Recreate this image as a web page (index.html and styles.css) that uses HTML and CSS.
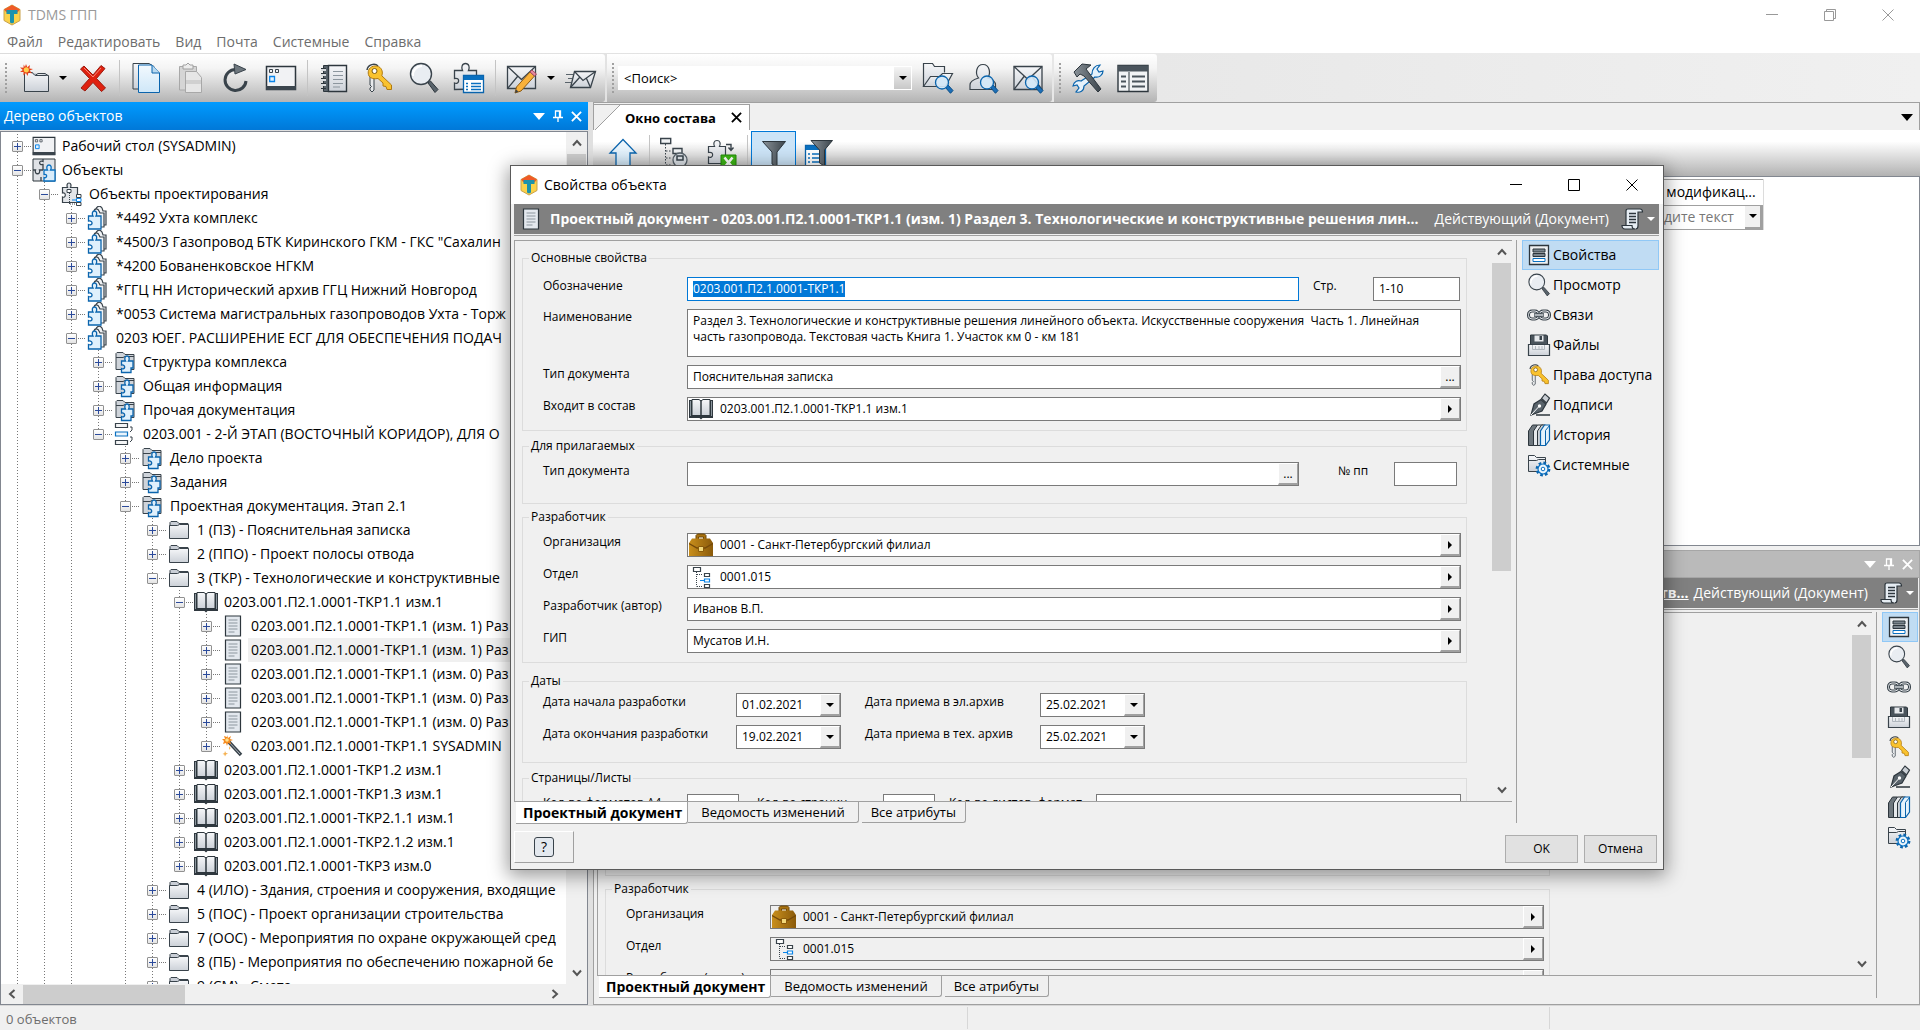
FILE: index.html
```
<!DOCTYPE html>
<html lang="ru">
<head>
  <meta charset="UTF-8">
  <title>TDMS ГПП</title>
  <link rel="stylesheet" href="styles.css">
</head>
<body>

<svg class="sprite" aria-hidden="true">
  <defs>
    <linearGradient id="gGrey" x1="0" y1="0" x2="0" y2="1"><stop offset="0" stop-color="#f6f7f9"/><stop offset="1" stop-color="#ccd1d8"/></linearGradient>
    <linearGradient id="gDark" x1="0" y1="0" x2="1" y2="0"><stop offset="0" stop-color="#8a9299"/><stop offset="1" stop-color="#3c454c"/></linearGradient>
    <linearGradient id="gBlue" x1="0" y1="0" x2="0" y2="1"><stop offset="0" stop-color="#f2f9fe"/><stop offset="1" stop-color="#cfe7f8"/></linearGradient>
    <linearGradient id="gBag" x1="0" y1="0" x2="1" y2="0"><stop offset="0" stop-color="#c98f1c"/><stop offset="1" stop-color="#8a5a0a"/></linearGradient>
  </defs>

  <symbol id="i-logo" viewBox="0 0 20 22">
    <path d="M10 1l8 4.500v11L10 21l-8-4.500v-11z" fill="#fbd24a" stroke="#c9a24a"/>
    <path d="M10 1l8 4.500-2.500 3L10 6 4.500 8.500 2 5.500z" fill="#ef5a28"/>
    <path d="M4.500 6h11v4h-3.500v8.500l-2 1-2-1V10H4.500z" fill="#1c93ad"/>
  </symbol>
  <symbol id="i-folder" viewBox="0 0 24 24">
    <path d="M3 20.500V4.500l1-1h6l2 2h9v3" fill="#c9ced6" stroke="#39434b"/>
    <path d="M2.500 7.500h8l2-1h9v14h-19z" fill="url(#gGrey)" stroke="#39434b"/>
  </symbol>
  <symbol id="i-newfolder" viewBox="0 0 32 32">
    <path d="M6.500 14v-3.500h8l3 3h13V29.500h-24z" fill="url(#gGrey)" stroke="#39434b"/>
    <path d="M14 10.500l3 3 3-2h7l3 2" fill="#c9ced6" stroke="#39434b"/>
    <path d="M8 2l1.300 3.200L12 3l-.6 3.400 3.600.600-3.200 1.600L14 11.500l-3.500-.9L9.500 14 8 11l-2.600 2.500.1-3.500L2 10l2.800-2L2 5.500l3.500.2L5.700 2.500 7 5z" fill="#e8421a"/>
    <circle cx="8.300" cy="7.800" r="2.600" fill="#ffcf4d"/>
  </symbol>
  <symbol id="i-delete" viewBox="0 0 32 32">
    <path d="M7 4l9 9 8-9.500 4 3-8.500 10L28.500 26l-4 3.500L16 20.500 8 29l-4-3 8.500-9.500L3.500 7z" fill="#e0210f" stroke="#9c1c10"/>
    <path d="M7 6l9 9 8-9" fill="none" stroke="#f58a7c"/>
  </symbol>
  <symbol id="i-copy" viewBox="0 0 32 32">
    <path d="M3 1.500h16l5 3V27H3z" fill="url(#gGrey)" stroke="#39434b"/>
    <path d="M8.500 3h13.500l7.500 8v19.500h-21z" fill="url(#gBlue)" stroke="#0a64ad"/>
    <path d="M22 3v8h7.500" fill="#b9d9f0" stroke="#0a64ad"/>
  </symbol>
  <symbol id="i-paste" viewBox="0 0 32 32">
    <path d="M4.500 4.500h17V28h-17z" fill="#d5d5d5" stroke="#a8a8a8"/>
    <path d="M8 3h3l2-2 2 2h3v4H8z" fill="#ececec" stroke="#a0a0a0"/>
    <path d="M10.500 9.500h11l5 6v15h-16z" fill="#e6e6e6" stroke="#a8a8a8"/>
    <path d="M11 18h15v4H11z" fill="#d0d0d0"/>
  </symbol>
  <symbol id="i-refresh" viewBox="0 0 32 32">
    <path d="M15.500 7.500A10.500 10.500 0 1 0 26 19" fill="none" stroke="#39434b" stroke-width="3"/>
    <path d="M14 2l12 5.500L15 12z" fill="#6e777e" stroke="#39434b"/>
  </symbol>
  <symbol id="i-desktop" viewBox="0 0 32 28">
    <path d="M1.500 2.500h29v23h-29z" fill="#f1f2f4" stroke="#2d363d" stroke-width="1.500"/>
    <path d="M1 22h30v4H1z" fill="#3b454d"/>
    <path d="M4.500 5.500h3v3h-3zM10.500 5.500h3v3h-3z" fill="none" stroke="#39434b"/>
    <path d="M4.700 12.500h4.800v5H4.700z" fill="#e3f1fd" stroke="#0a84e8" stroke-width="1.300"/>
  </symbol>
  <symbol id="i-notebook" viewBox="0 0 32 32">
    <path d="M5.500 3.500h6v26h-6z" fill="#59636b" stroke="#2d363d"/>
    <path d="M10.500 3.500h18v26h-18z" fill="url(#gGrey)" stroke="#2d363d" stroke-width="1.400"/>
    <path d="M3 8h5M3 13h5M3 18h5M3 23h5" stroke="#d7dadd" stroke-width="2"/>
    <path d="M3 6.500h5M3 11.500h5M3 16.500h5M3 21.500h5M3 26.500h5" stroke="#2d363d"/>
    <path d="M15 9.500h10M15 13.500h10M15 17.500h10M15 21.500h10M15 25h7" stroke="#8c969e"/>
  </symbol>
  <symbol id="i-key" viewBox="0 0 32 32">
    <path d="M7 14h4v14l-2 2-2-2v-2l1.500-1.500L7 23v-3z" fill="#e8eaec" stroke="#39434b"/>
    <path d="M4 8c1-6 8-7 11-4" fill="none" stroke="#39434b" stroke-width="1.500"/>
    <path d="M5.500 8.500C7 4 13 2.500 17 5.500c3 3 2.500 6 1.800 8.300L28.500 23v4.500H24l-1-3-3-.5v-3l-5-4.500c-4 .8-7.500 0-9-2.500-1-2-.9-3.900-.5-5.500z" fill="#f9c22e" stroke="#b07a10"/>
    <circle cx="11.500" cy="9" r="2.500" fill="#fff" stroke="#7a5a14"/>
  </symbol>
  <symbol id="i-zoom" viewBox="0 0 32 32">
    <path d="M20 21l2.500-2 7.500 8.500-3 3z" fill="#59636b" stroke="#2d363d"/>
    <circle cx="13" cy="12" r="10.500" fill="#e9edf2" stroke="#39434b" stroke-width="1.400"/>
    <path d="M5 14a9 9 0 0 1 9-10" fill="none" stroke="#fff" stroke-width="2"/>
  </symbol>
  <symbol id="i-puzzlelist" viewBox="0 0 32 32">
    <path d="M1.500 27.500V21c5 2 6-6 0-4.500V8.500h8c-1.500-3-.5-7 3-7s4.500 4 3 7h8V27z" fill="url(#gGrey)" stroke="#39434b" stroke-width="1.300"/>
    <path d="M10.500 13.500h20v17h-20z" fill="#fff" stroke="#0a64ad" stroke-width="1.300"/>
    <path d="M11 14h19v4H11z" fill="#0a70c0"/>
    <path d="M13 21.500h2M13 24.500h2M13 27.500h2M18 21.500h10M18 24.500h10M18 27.500h10" stroke="#0a70c0" stroke-width="1.600"/>
  </symbol>
  <symbol id="i-mail" viewBox="0 0 32 32">
    <path d="M2 4.500h28v23H2z" fill="url(#gGrey)" stroke="#39434b" stroke-width="1.300"/>
    <path d="M2 4.500l14 13 14-13M2 27.500l10-13M30 27.500l-10-13" fill="none" stroke="#39434b" stroke-width="1.300"/>
  </symbol>
  <symbol id="i-mailedit" viewBox="0 0 32 32">
    <path d="M1.500 4.500h28v22h-28z" fill="url(#gGrey)" stroke="#39434b" stroke-width="1.300"/>
    <path d="M1.500 4.500l14 13 14-13M1.500 26.500l10-12" fill="none" stroke="#39434b" stroke-width="1.300"/>
    <path d="M9 31l1.500-6L24 10l4.500 4L15 29z" fill="#f9b13a" stroke="#8c5a14"/>
    <path d="M24 10l2-2 4.500 4-2 2z" fill="#e78aa0" stroke="#a34a60"/>
    <path d="M9 31l1-3.500 2.500 2z" fill="#39434b"/>
  </symbol>
  <symbol id="i-mailsend" viewBox="0 0 32 32">
    <path d="M9.500 9.500h21l-5 16h-20z" fill="url(#gGrey)" stroke="#39434b" stroke-width="1.300"/>
    <path d="M9.500 9.500L18 18.500l12.500-9M5.500 25.500l9-10M25.500 25.500l-4-9" fill="none" stroke="#39434b" stroke-width="1.300"/>
    <path d="M1 12.500h7M3 16.500h4M0 20.500h6" stroke="#59636b"/>
  </symbol>
  <symbol id="i-lens" viewBox="0 0 32 32">
    <path d="M23 25l2.500-2.500L31 28.500l-2.500 2.800z" fill="#1c6fb8" stroke="#0a4d86"/>
    <circle cx="20" cy="20.500" r="6.500" fill="#d5e9f8" fill-opacity=".9" stroke="#0a64ad" stroke-width="1.300"/>
  </symbol>
  <symbol id="i-foldersearch" viewBox="0 0 32 32">
    <path d="M1.500 24.500V1.500h9l2 3h10v6" fill="url(#gGrey)" stroke="#39434b" stroke-width="1.200"/>
    <path d="M1.500 24.500l7-10h9l3-3h10l-7 13z" fill="url(#gGrey)" stroke="#39434b" stroke-width="1.200"/>
    <use href="#i-lens"/>
  </symbol>
  <symbol id="i-usersearch" viewBox="0 0 32 32">
    <path d="M3 27.500V23c0-4 5-6 8.500-7C8 12 9 2.500 16 2.500S24 12 20.500 16c4 1 8 3 8 7v4.500z" fill="url(#gGrey)" stroke="#39434b" stroke-width="1.200"/>
    <use href="#i-lens"/>
  </symbol>
  <symbol id="i-mailsearch" viewBox="0 0 32 32">
    <use href="#i-mail"/>
    <use href="#i-lens"/>
  </symbol>
  <symbol id="i-tools" viewBox="0 0 32 32">
    <path d="M20 12c0-5 3-9 8-9l-3 4 2 3 4-1c0 4-4 7-8 6L12 24c0 5-4 7-8 6l3-4-2-3-4 1c1-5 5-6 8-5z" fill="#e6f2fb" stroke="#0a64ad" stroke-width="1.200"/>
    <path d="M2 10l8-8 9 1-5 4 3 4 12 16-3 3-14-16-4-2-3 3z" fill="url(#gDark)" stroke="#2d363d"/>
  </symbol>
  <symbol id="i-table" viewBox="0 0 32 32">
    <path d="M1 3.500h30v26H1z" fill="#f1f3f5" stroke="#2d363d" stroke-width="1.400"/>
    <path d="M1 3.500h30v6H1z" fill="#4a545c"/>
    <path d="M12 10v19" stroke="#2d363d"/>
    <path d="M4 14.500h5M4 19.500h5M4 24.500h5M15 14.500h13M15 19.500h13M15 24.500h13" stroke="#4a545c" stroke-width="2"/>
  </symbol>
  <symbol id="i-up" viewBox="0 0 32 32">
    <path d="M16 2.500L29 16h-6v14.500H9V16H3z" fill="url(#gBlue)" stroke="#0a64ad" stroke-width="1.300"/>
  </symbol>
  <symbol id="i-treesearch" viewBox="0 0 32 32">
    <path d="M5.500 7v21M6 14h6M6 21h6M6 28h6" stroke="#39434b" stroke-dasharray="1.500 1.500" fill="none"/>
    <path d="M.7 1.500h10v5H.7zM13 11.500h9v5h-9z" fill="#f1f3f5" stroke="#39434b" stroke-width="1.400"/>
    <circle cx="20" cy="23" r="7" fill="#dfe4ea" fill-opacity=".9" stroke="#59636b" stroke-width="1.300"/>
    <path d="M17 19h6v4h-6zM25 28l5 5" stroke="#39434b" fill="none" stroke-width="1.500"/>
  </symbol>
  <symbol id="i-puzzlexls" viewBox="0 0 32 32">
    <path d="M3.500 26.500V20c5 2 6-6 0-4.500V9.500h6c-1.500-3-.5-6 2.500-6s4 3 2.500 6h6v17z" fill="url(#gGrey)" stroke="#39434b" stroke-width="1.200"/>
    <path d="M21 7.500h5v5M23.500 10.500l2.500 3 2.500-3" fill="none" stroke="#39434b" stroke-width="1.400"/>
    <path d="M16 18h15v14H16z" fill="#3db516" stroke="#238a06"/>
    <path d="M19.500 20.500l8 10M27.500 20.500l-8 10" stroke="#fff" stroke-width="2.600"/>
  </symbol>
  <symbol id="i-funnel" viewBox="0 0 32 32">
    <path d="M4.500 4.500h23L19 15v15l-5-3V15z" fill="url(#gDark)" stroke="#2d363d"/>
  </symbol>
  <symbol id="i-funnellist" viewBox="0 0 32 32">
    <path d="M2.500 8.500h20v21h-20z" fill="#fff" stroke="#0a64ad" stroke-width="1.300"/>
    <path d="M3 9h19v4H3z" fill="#0a70c0"/>
    <path d="M5 17h2M5 21h2M5 25h2M9 17h8M9 21h8M9 25h8" stroke="#0a70c0" stroke-width="1.600"/>
    <path d="M8 3.500h21.500L21.500 13v16l-5-3V13z" fill="url(#gDark)" stroke="#2d363d"/>
  </symbol>
  <symbol id="i-objects" viewBox="0 0 24 24">
    <path d="M1 1h22v22H1z" fill="#dfe2e6" stroke="#2d363d"/>
    <path d="M12 23v-3.500c3 1.500 4-4 0-3V12h3.500c-1.500-2.500-.5-5 1.500-5s3 2.500 1.500 5H23v11z" fill="#d9ecfa" stroke="#0a70c0" stroke-width="1.300"/>
    <path d="M11 1v2.500c-4-2-5 4 0 3V12M1 12h2.500c-1.500 5 5.500 5 4 0H11M9 23v-4" fill="none" stroke="#39434b" stroke-width="1.300"/>
  </symbol>
  <symbol id="i-project" viewBox="0 0 24 24">
    <path d="M3.500 20.500V15c3.500 1.500 4-5 0-4V5.500h5c-1-2-.5-4.500 1.500-4.500s2.500 2.500 1.500 4.500h7v15z" fill="#e2e5e9" stroke="#39434b" stroke-width="1.200"/>
    <path d="M8 7.500h4v3H8z" fill="#fff" stroke="#39434b"/>
    <path d="M10.500 11v11M11 22h7" stroke="#39434b" stroke-dasharray="1 1" fill="none"/>
    <path d="M17.500 12.500h4.500v3h-4.500zM17.500 20.500h4.500v3h-4.500z" fill="#fff" stroke="#39434b"/>
    <path d="M17.500 16.500h4.500v3h-4.500zM13 18h4" fill="#fff" stroke="#0a84e8"/>
  </symbol>
  <symbol id="i-complex" viewBox="0 0 24 24">
    <path d="M10 4c0-4 4-5 6-2l1 3h3v14h-3" fill="#f1f3f5" stroke="#39434b" stroke-width="1.200"/>
    <path d="M8 6c0-4 4-4 5-1l1 2h4v14h-3" fill="#f1f3f5" stroke="#39434b" stroke-width="1.200"/>
    <path d="M2.500 23v-4.500c4.500 2 5-4.500 0-3.500v-5h4.500c-1.500-2.500-.5-5 1.500-5s3 2.500 1.500 5h5v13z" fill="#dff0fc" stroke="#0a64ad" stroke-width="1.300"/>
  </symbol>
  <symbol id="i-folderpuzzle" viewBox="0 0 24 24">
    <path d="M3 19.500V3.500l1-1h6l2 2h9v15z" fill="#cfd4da" stroke="#39434b"/>
    <path d="M3 7.500h7l2-1h9" fill="none" stroke="#39434b"/>
    <path d="M8.500 22.500V18.500c4 2 4.500-4.500 0-3.500v-4h4c-1.500-2.500-.5-5 1.500-5s3 2.500 1.500 5h4.500v7h-2v4.500z" fill="#dff0fc" stroke="#0a64ad" stroke-width="1.300"/>
  </symbol>
  <symbol id="i-stage" viewBox="0 0 24 24">
    <path d="M2.500 1.500h12v4h-12zM2.500 18.500h12v4h-12z" fill="#f4f5f6" stroke="#39434b" stroke-width="1.200"/>
    <path d="M2.500 10h12v4h-12z" fill="#eaf5fd" stroke="#0a70c0" stroke-width="1.200"/>
    <path d="M17 5h2v3l-2 2M17 15h2v3l-2 2" fill="none" stroke="#39434b"/>
  </symbol>
  <symbol id="i-book" viewBox="0 0 24 24">
    <path d="M0 3h24v18H13.500l-1.500 1.500L10.500 21H0z" fill="#2f383f"/>
    <path d="M3 2.500h7l2 1.500 2-1.500h7V18.500H3z" fill="url(#gGrey)" stroke="#2d363d"/>
    <path d="M1.500 4v15M22.500 4v15" stroke="#8c969e"/>
    <path d="M12 4v15" stroke="#2d363d" stroke-width="1.500"/>
  </symbol>
  <symbol id="i-doc" viewBox="0 0 24 24">
    <path d="M4.500 2h15v20h-15z" fill="#e3e8ee" stroke="#2d363d" stroke-width="1.200"/>
    <path d="M7.500 6h9M7.500 9h9M7.500 12h9M7.500 15h9M7.500 18h6" stroke="#8c969e"/>
  </symbol>
  <symbol id="i-wand" viewBox="0 0 24 24">
    <path d="M7 7l13 14" stroke="#39434b" stroke-width="3.500"/>
    <path d="M8 8l11 12" stroke="#aab1b8"/>
    <path d="M6 1l1 3 3-2-1 3 3 1-3 1 1 3-3-1-1 3-1-3-3 1 1-3-2-2 3 0-1-3 3 1z" fill="#f58a1e"/>
    <circle cx="6" cy="6" r="1.800" fill="#ffe08a"/>
    <path d="M4 17l1 2 2 .5-2 1-1 2-.7-2L1.500 20l2-1zM8 12l.7 1.500L10 14l-1.300.7L8 16z" fill="#f5b04e"/>
  </symbol>
  <symbol id="i-props" viewBox="0 0 24 24">
    <path d="M2.500 2.500h19v19h-19z" fill="#eef0f2" stroke="#2d363d" stroke-width="1.300"/>
    <path d="M6 6h12v3H6zM6 10.500h12v3H6z" fill="#7b858d" stroke="#2d363d"/>
    <path d="M6 15.500h12v3H6z" fill="#fff" stroke="#0a70c0"/>
  </symbol>
  <symbol id="i-link" viewBox="0 0 24 24">
    <rect x="1.500" y="8" width="10" height="8" rx="3.500" fill="none" stroke="#39434b" stroke-width="3"/>
    <rect x="12.500" y="8" width="10" height="8" rx="3.500" fill="none" stroke="#39434b" stroke-width="3"/>
    <rect x="1.500" y="8" width="10" height="8" rx="3.500" fill="none" stroke="#e6e9ec"/>
    <rect x="12.500" y="8" width="10" height="8" rx="3.500" fill="none" stroke="#e6e9ec"/>
    <path d="M7 12h10" stroke="#39434b" stroke-width="3.500"/><path d="M7.500 12h9" stroke="#d5d9dd" stroke-width="1.500"/>
  </symbol>
  <symbol id="i-files" viewBox="0 0 24 24">
    <path d="M3.500 12V2h16l1 1v9z" fill="#4a545c" stroke="#2d363d"/>
    <path d="M7.500 2.500h9v6h-9z" fill="#e6e9ec"/><path d="M12.500 3h2.500v4h-2.500z" fill="#39434b"/>
    <path d="M1.500 11.500h21v11h-21z" fill="url(#gGrey)" stroke="#39434b" stroke-width="1.200"/>
    <path d="M5.500 12v4.500h12V12M8.500 13v3M12 13v3M15 13v3" fill="none" stroke="#b0b7be"/>
  </symbol>
  <symbol id="i-pen" viewBox="0 0 24 24">
    <path d="M4 22l3-11 7-4.500L19 11l-4 7z" fill="#59636b" stroke="#2d363d" stroke-width="1.200"/>
    <path d="M14.500 5.500L18 1l4.500 4-3 5z" fill="#c9ced4" stroke="#2d363d" stroke-width="1.200"/>
    <path d="M4 22l7.500-8" stroke="#fff"/><circle cx="12.500" cy="13" r="1.700" fill="#fff"/>
    <path d="M9 22h14" stroke="#2d363d" stroke-width="1.500"/>
  </symbol>
  <symbol id="i-history" viewBox="0 0 24 24">
    <path d="M1.500 22.500V8l4-6h5V17l-3 5.500z" fill="#6e777e" stroke="#2d363d"/>
    <path d="M6.500 22.500V8l4-6h6v15l-3 5.500z" fill="#e6e9ec" stroke="#2d363d"/>
    <path d="M10.500 22.500V8l4-6h4v15l-3 5.500z" fill="#cdd2d7" stroke="#2d363d"/>
    <path d="M13.500 22.500V8l4-6h5v15l-4 5.500z" fill="#e6f3fc" stroke="#0a64ad" stroke-width="1.200"/>
    <path d="M18.500 22V7.500l4-5" fill="none" stroke="#0a64ad"/>
  </symbol>
  <symbol id="i-system" viewBox="0 0 24 24">
    <path d="M1.500 18.500V2.500h6l2 2h9v14z" fill="url(#gGrey)" stroke="#39434b"/>
    <path d="M1.500 7.500h8l2-1h7" fill="none" stroke="#39434b"/>
    <circle cx="16" cy="16" r="5.800" fill="#d9ecfa" stroke="#0a64ad" stroke-width="3.200" stroke-dasharray="2.500 2"/>
    <circle cx="16" cy="16" r="5" fill="#e9f4fc" stroke="#0a70c0" stroke-width="1.200"/>
    <circle cx="16" cy="16" r="1.800" fill="#fff" stroke="#0a70c0"/>
  </symbol>
  <symbol id="i-bag" viewBox="0 0 24 24">
    <path d="M7 7V2.500L8.500 1h7L17 2.500V7h-2.500V4h-5v3z" fill="#a8720f" stroke="#6d4708"/>
    <path d="M0 10l3-4.500h18L24 10v13H0z" fill="url(#gBag)"/>
    <path d="M0 10.500L8 15h8l8-4.500" fill="none" stroke="#74490a" stroke-width="1.300"/>
    <path d="M9.500 13.500h5v5h-5z" fill="#f1d779" stroke="#8a5a0a"/>
  </symbol>
  <symbol id="i-org" viewBox="0 0 24 24">
    <path d="M7.500 7v14.500M8 9.500h6M8 21.500h6" stroke="#39434b" stroke-dasharray="1 1" fill="none"/>
    <path d="M4.500 2.500h7v4h-7zM15.500 8.500h5v3h-5zM15.500 19.500h5v3h-5z" fill="#fff" stroke="#39434b" stroke-width="1.200"/>
    <path d="M15.500 14h5v3h-5zM11 15.500h4" fill="#fff" stroke="#0a84e8" stroke-width="1.200"/>
  </symbol>
  <symbol id="i-scroll" viewBox="0 0 24 24">
    <path d="M6 18V4c0-1.500 1-2 2-2h12c2 0 2.500 1 2.500 3H18v14c0 2-1 3-2.500 3" fill="#e6edf3" stroke="#2d363d" stroke-width="1.200"/>
    <path d="M2 18.500h10c0 2 1 3.500 3 3.500H5c-2 0-3-1.500-3-3.500z" fill="#e6edf3" stroke="#2d363d" stroke-width="1.200"/>
    <path d="M9 6.500h7M9 9.500h7M9 12.500h7M9 15.500h7" stroke="#2d363d" stroke-width="1.300"/>
  </symbol>
  <symbol id="i-caret" viewBox="0 0 8 4"><path d="M0 0h8L4 4z" fill="currentColor"/></symbol>
  <symbol id="i-tri" viewBox="0 0 12 7"><path d="M0 0h12L6 7z" fill="currentColor"/></symbol>
  <symbol id="i-right" viewBox="0 0 4 8"><path d="M0 0l4 4-4 4z" fill="currentColor"/></symbol>
  <symbol id="i-chup" viewBox="0 0 10 8"><path d="M1 6.500l4-4.500 4 4.500" fill="none" stroke="currentColor" stroke-width="2"/></symbol>
  <symbol id="i-chdown" viewBox="0 0 10 8"><path d="M1 1.500L5 6l4-4.500" fill="none" stroke="currentColor" stroke-width="2"/></symbol>
  <symbol id="i-chleft" viewBox="0 0 8 10"><path d="M6.500 1L2 5l4.500 4" fill="none" stroke="currentColor" stroke-width="2"/></symbol>
  <symbol id="i-chright" viewBox="0 0 8 10"><path d="M1.500 1L6 5 1.500 9" fill="none" stroke="currentColor" stroke-width="2"/></symbol>
  <symbol id="i-x" viewBox="0 0 12 12"><path d="M1 1l10 10M11 1L1 11" fill="none" stroke="currentColor" stroke-width="2"/></symbol>
  <symbol id="i-pin" viewBox="0 0 10 12"><path d="M2.500 7V1h5v6M6.500 1v6M0 7.500h10M5 8v4" fill="none" stroke="currentColor" stroke-width="1.300"/></symbol>
  <symbol id="i-wmin" viewBox="0 0 12 12"><path d="M0 5.500h12" stroke="currentColor"/></symbol>
  <symbol id="i-wmax" viewBox="0 0 12 12"><path d="M.5.5h11v11H.5z" fill="none" stroke="currentColor"/></symbol>
  <symbol id="i-wrestore" viewBox="0 0 12 12"><path d="M.5 2.500h9v9h-9zM2.500 2.500v-2h9v9h-2" fill="none" stroke="currentColor"/></symbol>
  <symbol id="i-wclose" viewBox="0 0 12 12"><path d="M.5.5l11 11M11.500.5l-11 11" stroke="currentColor"/></symbol>
</svg>

<header class="titlebar">
  <svg class="logo"><use href="#i-logo"/></svg>
  <span class="app-name">TDMS ГПП</span>
  <div class="win-buttons">
    <button aria-label="Свернуть"><svg><use href="#i-wmin"/></svg></button>
    <button aria-label="Восстановить"><svg><use href="#i-wrestore"/></svg></button>
    <button aria-label="Закрыть"><svg><use href="#i-wclose"/></svg></button>
  </div>
</header>

<nav class="menu">
  <button>Файл</button>
  <button>Редактировать</button>
  <button>Вид</button>
  <button>Почта</button>
  <button>Системные</button>
  <button>Справка</button>
</nav>

<div class="rebar">
  <div class="toolbar">
    <i class="grip"></i>
    <button class="tool" aria-label="Создать"><svg><use href="#i-newfolder"/></svg></button>
    <button class="drop" aria-label="Варианты"><svg class="caret"><use href="#i-caret"/></svg></button>
    <button class="tool" aria-label="Удалить"><svg><use href="#i-delete"/></svg></button>
    <i class="sep"></i>
    <button class="tool" aria-label="Копировать"><svg><use href="#i-copy"/></svg></button>
    <button class="tool" aria-label="Вставить"><svg><use href="#i-paste"/></svg></button>
    <button class="tool" aria-label="Обновить"><svg><use href="#i-refresh"/></svg></button>
    <button class="tool" aria-label="Рабочий стол"><svg><use href="#i-desktop"/></svg></button>
    <i class="sep"></i>
    <button class="tool" aria-label="Журнал"><svg><use href="#i-notebook"/></svg></button>
    <button class="tool" aria-label="Права доступа"><svg><use href="#i-key"/></svg></button>
    <button class="tool" aria-label="Просмотр"><svg><use href="#i-zoom"/></svg></button>
    <button class="tool" aria-label="Свойства"><svg><use href="#i-puzzlelist"/></svg></button>
    <i class="sep"></i>
    <button class="tool" aria-label="Написать"><svg><use href="#i-mailedit"/></svg></button>
    <button class="drop" aria-label="Варианты"><svg class="caret"><use href="#i-caret"/></svg></button>
    <button class="tool" aria-label="Отправить"><svg><use href="#i-mailsend"/></svg></button>
  </div>
  <div class="toolbar">
    <i class="grip"></i>
    <div class="search">
      <input type="text" value="&lt;Поиск&gt;" aria-label="Поиск">
      <button aria-label="Список"><svg class="caret"><use href="#i-caret"/></svg></button>
    </div>
    <button class="tool" aria-label="Найти объект"><svg><use href="#i-foldersearch"/></svg></button>
    <button class="tool" aria-label="Найти пользователя"><svg><use href="#i-usersearch"/></svg></button>
    <button class="tool" aria-label="Найти письмо"><svg><use href="#i-mailsearch"/></svg></button>
  </div>
  <div class="toolbar">
    <i class="grip"></i>
    <button class="tool" aria-label="Настройки"><svg><use href="#i-tools"/></svg></button>
    <button class="tool" aria-label="Панели"><svg><use href="#i-table"/></svg></button>
  </div>
</div>

<main class="work">
  <section class="left">
    <div class="pane-head">
      <span>Дерево объектов</span>
      <button aria-label="Меню"><svg class="tri"><use href="#i-tri"/></svg></button>
      <button aria-label="Закрепить"><svg class="pin"><use href="#i-pin"/></svg></button>
      <button aria-label="Закрыть"><svg class="x"><use href="#i-x"/></svg></button>
    </div>
    <div class="tree-box">
      <div class="tree-view">
        <ul class="tree" id="tree"></ul>
        <div class="vscroll">
          <svg><use href="#i-chup"/></svg>
          <i class="thumb"></i>
          <svg><use href="#i-chdown"/></svg>
        </div>
      </div>
      <div class="hscroll">
        <svg><use href="#i-chleft"/></svg>
        <i class="thumb"></i>
        <svg><use href="#i-chright"/></svg>
      </div>
    </div>
  </section>

  <section class="right">
    <div class="upper">
      <div class="doc-tabs">
        <div class="doc-tab"><span>Окно состава</span><button aria-label="Закрыть"><svg class="x"><use href="#i-x"/></svg></button></div>
        <button class="tabs-menu" aria-label="Окна"><svg class="tri"><use href="#i-tri"/></svg></button>
      </div>
      <div class="list-tools">
        <button class="tool" aria-label="Вверх"><svg><use href="#i-up"/></svg></button>
        <i class="sep"></i>
        <button class="tool" aria-label="Найти в дереве"><svg><use href="#i-treesearch"/></svg></button>
        <button class="tool" aria-label="Экспорт"><svg><use href="#i-puzzlexls"/></svg></button>
        <i class="sep"></i>
        <button class="tool on" aria-label="Фильтр"><svg><use href="#i-funnel"/></svg></button>
        <button class="tool" aria-label="Настройка фильтра"><svg><use href="#i-funnellist"/></svg></button>
      </div>
      <div class="list">
        <table>
          <thead>
            <tr><th>Описание</th><th class="date">Дата модификац...</th></tr>
            <tr>
              <td><input type="text" placeholder="Введите текст" aria-label="Фильтр по описанию"></td>
              <td class="date"><div class="filter"><input type="text" placeholder="Введите текст" aria-label="Фильтр по дате"><button aria-label="Список"><svg class="caret"><use href="#i-caret"/></svg></button></div></td>
            </tr>
          </thead>
        </table>
      </div>
    </div>

    <div class="lower">
      <div class="pane-head idle">
        <span></span>
        <button aria-label="Меню"><svg class="tri"><use href="#i-tri"/></svg></button>
        <button aria-label="Закрепить"><svg class="pin"><use href="#i-pin"/></svg></button>
        <button aria-label="Закрыть"><svg class="x"><use href="#i-x"/></svg></button>
      </div>
      <div class="doc-head linked">
        <a href="#">Проектный документ - 0203.001.П2.1.0001-ТКР1.1 (изм. 1) Раздел 3. Технологические и конструктивные решения линейного объекта. Искусств...</a>
        <span class="state">Действующий (Документ)</span>
        <button aria-label="Статус"><svg class="scroll"><use href="#i-scroll"/></svg><svg class="caret"><use href="#i-caret"/></svg></button>
      </div>
      <div class="card">
        <div class="card-main" id="paneCard"></div>
        <nav class="side small">
          <button class="on" aria-label="Свойства"><svg><use href="#i-props"/></svg></button>
          <button aria-label="Просмотр"><svg><use href="#i-zoom"/></svg></button>
          <button aria-label="Связи"><svg><use href="#i-link"/></svg></button>
          <button aria-label="Файлы"><svg><use href="#i-files"/></svg></button>
          <button aria-label="Права доступа"><svg><use href="#i-key"/></svg></button>
          <button aria-label="Подписи"><svg><use href="#i-pen"/></svg></button>
          <button aria-label="История"><svg><use href="#i-history"/></svg></button>
          <button aria-label="Системные"><svg><use href="#i-system"/></svg></button>
        </nav>
      </div>
    </div>
  </section>
</main>

<footer class="status"><span>0 объектов</span><span></span><span></span></footer>

<div class="dialog" role="dialog" aria-label="Свойства объекта">
  <div class="dialog-title">
    <svg class="logo"><use href="#i-logo"/></svg>
    <span>Свойства объекта</span>
    <div class="win-buttons">
      <button aria-label="Свернуть"><svg><use href="#i-wmin"/></svg></button>
      <button aria-label="Развернуть"><svg><use href="#i-wmax"/></svg></button>
      <button aria-label="Закрыть"><svg><use href="#i-wclose"/></svg></button>
    </div>
  </div>
  <div class="dialog-body">
    <div class="doc-head">
      <svg class="doc"><use href="#i-doc"/></svg>
      <b>Проектный документ - 0203.001.П2.1.0001-ТКР1.1 (изм. 1) Раздел 3. Технологические и конструктивные решения лин...</b>
      <span class="state">Действующий (Документ)</span>
      <button aria-label="Статус"><svg class="scroll"><use href="#i-scroll"/></svg><svg class="caret"><use href="#i-caret"/></svg></button>
    </div>
    <div class="card">
      <div class="card-main" id="dialogCard"></div>
      <nav class="side">
        <button class="on"><svg><use href="#i-props"/></svg>Свойства</button>
        <button><svg><use href="#i-zoom"/></svg>Просмотр</button>
        <button><svg><use href="#i-link"/></svg>Связи</button>
        <button><svg><use href="#i-files"/></svg>Файлы</button>
        <button><svg><use href="#i-key"/></svg>Права доступа</button>
        <button><svg><use href="#i-pen"/></svg>Подписи</button>
        <button><svg><use href="#i-history"/></svg>История</button>
        <button><svg><use href="#i-system"/></svg>Системные</button>
      </nav>
    </div>
    <div class="dialog-foot">
      <button class="help" aria-label="Справка"><span>?</span></button>
      <button class="btn">OK</button>
      <button class="btn">Отмена</button>
    </div>
  </div>
</div>

<!-- card of the document, used by the dialog and by the lower pane -->
<template id="cardTpl">
  <div class="form-view">
    <form class="form">
      <fieldset class="g-main">
        <legend>Основные свойства</legend>
        <div class="line">
          <label class="f"><span class="l1">Обозначение</span><span class="box w-mid"><input class="code" type="text" value="0203.001.П2.1.0001-ТКР1.1"></span></label>
          <label class="f"><span class="l-page">Стр.</span><span class="box w-page"><input type="text" value="1-10"></span></label>
        </div>
        <label class="f tall"><span class="l1">Наименование</span><textarea>Раздел 3. Технологические и конструктивные решения линейного объекта. Искусственные сооружения  Часть 1. Линейная часть газопровода. Текстовая часть Книга 1. Участок км 0 - км 181</textarea></label>
        <label class="f"><span class="l1">Тип документа</span><span class="box"><input type="text" value="Пояснительная записка"><button type="button">...</button></span></label>
        <label class="f"><span class="l1">Входит в состав</span><span class="box"><svg><use href="#i-book"/></svg><input type="text" value="0203.001.П2.1.0001-ТКР1.1 изм.1"><button type="button" aria-label="Открыть"><svg class="right-arrow"><use href="#i-right"/></svg></button></span></label>
      </fieldset>
      <fieldset class="g-attach">
        <legend>Для прилагаемых</legend>
        <div class="line">
          <label class="f"><span class="l1">Тип документа</span><span class="box w-mid"><input type="text"><button type="button">...</button></span></label>
          <label class="f"><span class="l-num">№ пп</span><span class="box w-num"><input type="text"></span></label>
        </div>
      </fieldset>
      <fieldset class="g-dev">
        <legend>Разработчик</legend>
        <label class="f"><span class="l1">Организация</span><span class="box"><svg><use href="#i-bag"/></svg><input type="text" value="0001 - Санкт-Петербургский филиал"><button type="button" aria-label="Открыть"><svg class="right-arrow"><use href="#i-right"/></svg></button></span></label>
        <label class="f"><span class="l1">Отдел</span><span class="box"><svg><use href="#i-org"/></svg><input type="text" value="0001.015"><button type="button" aria-label="Открыть"><svg class="right-arrow"><use href="#i-right"/></svg></button></span></label>
        <label class="f"><span class="l1">Разработчик (автор)</span><span class="box"><input type="text" value="Иванов В.П."><button type="button" aria-label="Открыть"><svg class="right-arrow"><use href="#i-right"/></svg></button></span></label>
        <label class="f"><span class="l1">ГИП</span><span class="box"><input type="text" value="Мусатов И.Н."><button type="button" aria-label="Открыть"><svg class="right-arrow"><use href="#i-right"/></svg></button></span></label>
      </fieldset>
      <fieldset class="g-dates">
        <legend>Даты</legend>
        <div class="line">
          <label class="f"><span class="l-date">Дата начала разработки</span><span class="box w-date"><input type="text" value="01.02.2021"><button type="button" aria-label="Календарь"><svg class="caret"><use href="#i-caret"/></svg></button></span></label>
          <label class="f"><span class="l-date2">Дата приема в эл.архив</span><span class="box w-date"><input type="text" value="25.02.2021"><button type="button" aria-label="Календарь"><svg class="caret"><use href="#i-caret"/></svg></button></span></label>
        </div>
        <div class="line">
          <label class="f"><span class="l-date">Дата окончания разработки</span><span class="box w-date"><input type="text" value="19.02.2021"><button type="button" aria-label="Календарь"><svg class="caret"><use href="#i-caret"/></svg></button></span></label>
          <label class="f"><span class="l-date2">Дата приема в тех. архив</span><span class="box w-date"><input type="text" value="25.02.2021"><button type="button" aria-label="Календарь"><svg class="caret"><use href="#i-caret"/></svg></button></span></label>
        </div>
      </fieldset>
      <fieldset class="g-pages">
        <legend>Страницы/Листы</legend>
        <div class="line">
          <label class="f"><span class="l1">Кол-во форматов А4</span><span class="box w-count"><input type="text"></span></label>
          <label class="f"><span class="l-count">Кол-во страниц</span><span class="box w-count"><input type="text"></span></label>
          <label class="f grow"><span class="l-format">Кол-во листов, формат</span><span class="box"><input type="text"></span></label>
        </div>
      </fieldset>
    </form>
    <div class="vscroll">
      <svg><use href="#i-chup"/></svg>
      <i class="thumb"></i>
      <svg><use href="#i-chdown"/></svg>
    </div>
  </div>
  <div class="tabs">
    <button class="on">Проектный документ</button>
    <button>Ведомость изменений</button>
    <button>Все атрибуты</button>
  </div>
</template>

<script>
  // [icon, text, state, children, current], state: "+" closed, "-" open
  const doc = "0203.001.П2.1.0001-ТКР";
  const data = [
    ["desktop", "Рабочий стол (SYSADMIN)", "+"],
    ["objects", "Объекты", "-", [
      ["project", "Объекты проектирования", "-", [
        ["complex", "*4492 Ухта комплекс", "+"],
        ["complex", "*4500/3 Газопровод БТК Киринского ГКМ - ГКС \"Сахалин", "+"],
        ["complex", "*4200 Бованенковское НГКМ", "+"],
        ["complex", "*ГГЦ НН Исторический архив ГГЦ Нижний Новгород", "+"],
        ["complex", "*0053 Система магистральных газопроводов Ухта - Торж", "+"],
        ["complex", "0203 ЮЕГ. РАСШИРЕНИЕ ЕСГ ДЛЯ ОБЕСПЕЧЕНИЯ ПОДАЧ", "-", [
          ["folderpuzzle", "Структура комплекса", "+"],
          ["folderpuzzle", "Общая информация", "+"],
          ["folderpuzzle", "Прочая документация", "+"],
          ["stage", "0203.001 - 2-Й ЭТАП (ВОСТОЧНЫЙ КОРИДОР), ДЛЯ О", "-", [
            ["folderpuzzle", "Дело проекта", "+"],
            ["folderpuzzle", "Задания", "+"],
            ["folderpuzzle", "Проектная документация. Этап 2.1", "-", [
              ["folder", "1 (ПЗ) - Пояснительная записка", "+"],
              ["folder", "2 (ППО) - Проект полосы отвода", "+"],
              ["folder", "3 (ТКР) - Технологические и конструктивные", "-", [
                ["book", doc + "1.1 изм.1", "-", [
                  ["doc", doc + "1.1 (изм. 1) Раз", "+"],
                  ["doc", doc + "1.1 (изм. 1) Раз", "+", null, true],
                  ["doc", doc + "1.1 (изм. 0) Раз", "+"],
                  ["doc", doc + "1.1 (изм. 0) Раз", "+"],
                  ["doc", doc + "1.1 (изм. 0) Раз", "+"],
                  ["wand", doc + "1.1 SYSADMIN", "+"]
                ]],
                ["book", doc + "1.2 изм.1", "+"],
                ["book", doc + "1.3 изм.1", "+"],
                ["book", doc + "2.1.1 изм.1", "+"],
                ["book", doc + "2.1.2 изм.1", "+"],
                ["book", doc + "3 изм.0", "+"]
              ]],
              ["folder", "4 (ИЛО) - Здания, строения и сооружения, входящие", "+"],
              ["folder", "5 (ПОС) - Проект организации строительства", "+"],
              ["folder", "7 (ООС) - Мероприятия по охране окружающей сред", "+"],
              ["folder", "8 (ПБ) - Мероприятия по обеспечению пожарной бе", "+"],
              ["folder", "9 (СМ) - Смета", "+"],
              ["folder", "", "+"]
            ]],
            ["folderpuzzle", "", "+"]
          ]]
        ]],
        ["complex", "", "+"]
      ]],
      ["project", "", "+"]
    ]],
    ["objects", "", "+"]
  ];

  function build(ul, items) {
    items.forEach(function (it) {
      const li = document.createElement("li");
      const row = document.createElement("div");
      row.className = "row" + (it[4] ? " current" : "");
      row.innerHTML = '<button class="exp ' + (it[2] === "-" ? "open" : "") + '" aria-label="Развернуть"></button><i class="stub"></i>' +
        '<svg><use href="#i-' + it[0] + '"/></svg><span></span>';
      row.querySelector("span").textContent = it[1];
      li.appendChild(row);
      if (it[3]) {
        const sub = document.createElement("ul");
        build(sub, it[3]);
        li.appendChild(sub);
      }
      ul.appendChild(li);
    });
  }
  build(document.getElementById("tree"), data);

  const tpl = document.getElementById("cardTpl").content;
  document.getElementById("paneCard").appendChild(tpl.cloneNode(true));
  document.getElementById("dialogCard").appendChild(tpl.cloneNode(true));
  document.querySelectorAll("#paneCard input, #paneCard textarea").forEach(function (el) {
    el.readOnly = true;
  });

  const code = document.querySelector("#dialogCard .code");
  code.focus();
  code.select();
</script>

</body>
</html>
```
FILE: styles.css
```
* {
  box-sizing: border-box;
}
body {
  margin: 0;
  height: 100vh;
  display: flex;
  flex-direction: column;
  overflow: hidden;
  background: #f0f0f0;
  font-family: "Open Sans", "Noto Sans", sans-serif;
  font-size: 14px;
  line-height: 20px;
  color: #000;
}
button, input, textarea {
  font: inherit;
  color: inherit;
  margin: 0;
  padding: 0;
  border: none;
  background: none;
  outline: none;
}
button {
  display: flex;
  align-items: center;
  justify-content: center;
}
svg {
  display: block;
  flex: none;
}
.sprite {
  position: absolute;
  width: 0;
  height: 0;
}
.caret { width: 8px; height: 4px; }
.tri { width: 12px; height: 7px; }
.pin { width: 10px; height: 12px; }
.x { width: 11px; height: 11px; }
.logo { width: 20px; height: 22px; }

/* main window */
.titlebar {
  height: 30px;
  display: flex;
  align-items: center;
  padding: 0 3px 0 2px;
  background: #fff;
  color: #999;
}
.app-name {
  margin-left: 6px;
}
.win-buttons {
  margin-left: auto;
  display: flex;
}
.win-buttons button {
  width: 58px;
  height: 28px;
}
.win-buttons svg {
  width: 12px;
  height: 12px;
}
.menu {
  height: 23px;
  display: flex;
  gap: 15px;
  padding-left: 7px;
  background: #fff;
  color: #6d6d6d;
}
.menu button {
  height: 23px;
}
.rebar {
  height: 49px;
  display: flex;
  gap: 2px;
  padding-top: 1px;
  background: linear-gradient(to right, #dcdcdc, #f0f0f0);
}
.toolbar {
  display: flex;
  align-items: center;
  padding-right: 2px;
  border-radius: 0 3px 3px 0;
  background: linear-gradient(#fff, #f4f4f4 30%, #b4b4b4);
}
.grip {
  width: 2px;
  height: 30px;
  margin: 0 4px 0 5px;
  background: repeating-linear-gradient(#a0a0a0 0 2px, transparent 2px 4px);
}
.tool {
  width: 45px;
  height: 45px;
}
.tool svg {
  width: 32px;
  height: 32px;
}
.drop {
  width: 14px;
  height: 45px;
}
.sep {
  width: 1px;
  height: 36px;
  margin: 0 3px 0 4px;
  background: #c4c4c4;
}
.search {
  width: 294px;
  height: 24px;
  display: flex;
  margin-right: 3px;
  background: #fff;
  font-size: 13px;
}
.search input {
  flex: 1;
  min-width: 0;
  padding-left: 6px;
}
.search button {
  width: 17px;
  margin: 1px;
  background: linear-gradient(#f4f4f4, #c8c8c8);
}

.work {
  flex: 1;
  min-height: 0;
  display: flex;
  gap: 5px;
  background: #e0e0e0;
}
.left {
  width: 588px;
  display: flex;
  flex-direction: column;
}
.pane-head {
  height: 28px;
  display: flex;
  align-items: center;
  gap: 8px;
  padding: 0 6px 0 4px;
  background: linear-gradient(#009bff, #0078d8);
  color: #fff;
}
.pane-head span {
  flex: 1;
}
.pane-head.idle {
  border: 1px solid #a6a6a6;
  background: #bababa;
}
.tree-box {
  flex: 1;
  min-height: 0;
  margin-top: 1px;
  border: 1px solid #828790;
  background: #fff;
  display: flex;
  flex-direction: column;
}
.tree-view {
  flex: 1;
  min-height: 0;
  display: flex;
}
.tree {
  flex: 1;
  min-width: 0;
  overflow: hidden;
  padding-top: 2px;
}
.tree, .tree ul {
  list-style: none;
  margin: 0;
  padding-left: 0;
}
.tree ul {
  margin-left: 27px;
}
/* dotted branch of each level, cut at the last row */
.tree li {
  background: repeating-linear-gradient(#777 0 1px, transparent 1px 3px) 16px 0 / 1px 100% no-repeat;
}
.tree li:last-child {
  background-size: 1px 12px;
}
.row {
  height: 24px;
  display: flex;
  align-items: center;
  padding-left: 11px;
  white-space: nowrap;
}
.exp {
  flex: none;
  width: 11px;
  height: 11px;
  border: 1px solid #919191;
  border-radius: 1px;
  background:
    linear-gradient(#2b4a9b, #2b4a9b) center / 7px 1px no-repeat,
    linear-gradient(#2b4a9b, #2b4a9b) center / 1px 7px no-repeat,
    linear-gradient(#fff, #e4e4e4);
}
.exp.open {
  background:
    linear-gradient(#2b4a9b, #2b4a9b) center / 7px 1px no-repeat,
    linear-gradient(#fff, #e4e4e4);
}
.stub {
  flex: none;
  width: 7px;
  height: 1px;
  margin: 0 1px;
  background: repeating-linear-gradient(to right, #777 0 1px, transparent 1px 2px);
}
.row svg {
  width: 24px;
  height: 24px;
}
.row span {
  flex: 1;
  margin-left: 3px;
  padding-left: 3px;
  line-height: 24px;
}
.row.current span {
  background: #f0f0f0;
}
.vscroll {
  flex: none;
  width: 21px;
  display: flex;
  flex-direction: column;
  align-items: center;
  background: #f0f0f0;
  color: #555;
}
.vscroll svg {
  width: 10px;
  height: 8px;
  margin: 7px 0;
}
.vscroll .thumb {
  width: 19px;
  height: 308px;
  background: #cdcdcd;
}
.vscroll svg:last-child {
  margin-top: auto;
}
.hscroll {
  height: 20px;
  display: flex;
  align-items: center;
  padding-right: 21px;
  background: #f0f0f0;
  color: #555;
}
.hscroll svg {
  width: 8px;
  height: 10px;
  margin: 0 7px;
}
.hscroll svg:last-child {
  margin-left: auto;
}
.hscroll .thumb {
  width: 162px;
  height: 19px;
  background: #cdcdcd;
}

.right {
  flex: 1;
  min-width: 0;
  display: flex;
  flex-direction: column;
  gap: 4px;
  background: #f0f0f0;
}
.upper {
  flex: 1;
  min-height: 0;
  display: flex;
  flex-direction: column;
}
.doc-tabs {
  height: 28px;
  display: flex;
  align-items: flex-end;
  border: 1px solid #a0a0a0;
  border-bottom: none;
}
.doc-tab {
  height: 26px;
  width: 156px;
  display: flex;
  align-items: center;
  padding-left: 31px;
  border: 1px solid #a0a0a0;
  border-width: 1px 1px 0 0;
  background: linear-gradient(to bottom right, #f0f0f0 49%, #a0a0a0 50%, #fff 51%) 0 0 / 26px 26px no-repeat, #fff;
  font-size: 13px;
  font-weight: bold;
}
.doc-tab button {
  margin-left: auto;
  width: 26px;
}
.tabs-menu {
  margin-left: auto;
  width: 24px;
  height: 26px;
}
.list-tools {
  height: 46px;
  display: flex;
  align-items: center;
  padding-left: 7px;
  background: linear-gradient(#fff 25%, #b2b2b2);
}
.tool.on {
  border: 1px solid #0078d7;
  background: #cce4f7;
}
.list {
  flex: 1;
  min-height: 0;
  border: 1px solid #828790;
  border-left: none;
  background: #fff;
}
.list table {
  width: 1171px;
  margin-top: 2px;
  border-top: 1px solid #a0a0a0;
  border-collapse: collapse;
  table-layout: fixed;
}
.list th, .list td {
  height: 25px;
  padding: 0;
  border-right: 1px solid #dcdcdc;
  font-weight: normal;
  text-align: left;
}
.list .date {
  width: 134px;
}
.list th.date {
  padding-left: 1px;
}
.list td input {
  width: 100%;
  padding-left: 8px;
}
.list ::placeholder {
  color: #777;
}
.filter {
  height: 25px;
  display: flex;
  border: 1px solid #a0a0a0;
}
.filter button {
  flex: none;
  width: 17px;
  border-right: 2px solid #a0a0a0;
  border-bottom: 2px solid #a0a0a0;
  background: #f0f0f0;
}

.lower {
  height: 455px;
  display: flex;
  flex-direction: column;
  padding-right: 1px;
  border: 1px solid #a0a0a0;
  border-top: none;
}
.lower .pane-head {
  margin: 0 -2px 0 -1px;
}
.doc-head {
  flex: none;
  height: 30px;
  display: flex;
  align-items: center;
  background: #808080;
  color: #fff;
  white-space: nowrap;
}
.doc-head.linked {
  justify-content: flex-end;
}
.doc-head a {
  color: #fff;
  font-weight: bold;
}
.doc-head b {
  flex: 1;
}
.doc {
  width: 24px;
  height: 24px;
  margin: 0 7px 0 5px;
}
.state {
  margin: 0 11px 0 5px;
}
.doc-head button {
  gap: 3px;
  padding-right: 4px;
}
.scroll {
  width: 24px;
  height: 24px;
}
.card {
  flex: 1;
  min-height: 0;
  display: flex;
  margin-top: 1px;
  padding-top: 2px;
  border-top: 1px solid #a0a0a0;
}
.card-main {
  flex: 1;
  min-width: 0;
  display: flex;
  flex-direction: column;
  padding-right: 4px;
  border-right: 1px solid #a0a0a0;
}
.lower .card-main {
  padding-left: 3px;
  margin-bottom: 6px;
}
.side {
  width: 142px;
  display: flex;
  flex-direction: column;
  padding-left: 5px;
}
.side.small {
  width: 41px;
}
.side button {
  height: 30px;
  justify-content: flex-start;
  gap: 2px;
  padding-left: 4px;
  border: 1px solid transparent;
}
.side button.on {
  border-color: #90c8f6;
  background: #c0dcf3;
}
.side svg {
  width: 24px;
  height: 24px;
}

/* document card */
.form-view {
  flex: 1;
  min-height: 0;
  display: flex;
  border: 1px solid #a0a0a0;
  border-right: none;
}
.form {
  flex: 1;
  min-width: 0;
  height: 100%;
  overflow: hidden;
  padding: 9px 0 0 7px;
  font-size: 12px;
  line-height: 16px;
}
fieldset {
  width: 945px;
  margin: 0 0 7px;
  padding: 8px 5px 9px 20px;
  border: 1px solid #dcdcdc;
  display: flex;
  flex-direction: column;
  gap: 8px;
}
legend {
  height: 16px;
  margin-left: -14px;
  padding: 0 2px;
}
.g-main {
  padding-top: 11px;
}
.g-attach {
  margin-bottom: 5px;
  padding-bottom: 17px;
}
.g-dev {
  margin-bottom: 10px;
}
.g-dates {
  padding-top: 4px;
  padding-bottom: 13px;
}
.line {
  display: flex;
}
.f {
  display: flex;
  align-items: center;
}
.f > span:first-child {
  flex: none;
  padding-bottom: 6px;
}
.f.grow {
  flex: 1;
}
.f.tall {
  align-items: flex-start;
}
.l1 { width: 144px; }
.l-page { width: 74px; padding-left: 14px; }
.l-num { width: 95px; padding-left: 39px; }
.l-date { width: 193px; }
.l-date2 { width: 199px; padding-left: 24px; }
.l-count { width: 144px; padding-left: 18px; }
.l-format { width: 161px; padding-left: 14px; }
.box {
  flex: 1;
  height: 24px;
  display: flex;
  align-items: center;
  border: 1px solid #7a7a7a;
  background: #fff;
}
.box.w-mid { flex: none; width: 612px; }
.box.w-page { flex: none; width: 87px; }
.box.w-num { flex: none; width: 63px; }
.box.w-date { flex: none; width: 105px; }
.box.w-count { flex: none; width: 52px; }
.box:has(input:focus) {
  border-color: #0078d7;
}
.box > svg {
  width: 24px;
  height: 24px;
  margin: 0 2px 0 1px;
}
.box input {
  flex: 1;
  min-width: 0;
  height: 16px;
  padding: 0 5px;
}
.box input::selection {
  background: #0078d7;
  color: #fff;
}
.box button {
  flex: none;
  width: 20px;
  height: 22px;
  border: 1px solid #fff;
  border-right-color: #a0a0a0;
  border-bottom: 2px solid #a0a0a0;
  background: #f0f0f0;
}
.right-arrow {
  width: 4px;
  height: 8px;
}
textarea {
  display: block;
  flex: 1;
  height: 48px;
  padding: 3px 18px 3px 5px;
  border: 1px solid #7a7a7a;
  background: #fff;
  resize: none;
  overflow: hidden;
}
.lower .box, .lower textarea {
  background: #f0f0f0;
}
.lower .vscroll .thumb {
  height: 123px;
}
.tabs {
  flex: none;
  height: 22px;
  display: flex;
  align-items: flex-start;
  gap: 3px;
  padding-left: 2px;
}
.tabs button {
  height: 21px;
  padding: 0 9px;
  border: 1px solid #a0a0a0;
  border-width: 0 1px 1px 0;
  border-radius: 0 0 3px 0;
  font-size: 13px;
}
.tabs button.on {
  height: 22px;
  padding: 0 5px 0 7px;
  background: #fff;
  font-size: 14px;
  font-weight: bold;
}
.tabs button.on + button {
  padding: 0 13px;
  margin-left: -3px;
}

/* properties window over the main one */
.dialog {
  position: absolute;
  left: 510px;
  top: 165px;
  width: 1154px;
  border: 1px solid #5a5a5a;
  background: #f0f0f0;
  box-shadow: 0 4px 18px 2px rgba(0,0,0,0.4);
}
.dialog-title {
  height: 38px;
  display: flex;
  align-items: center;
  gap: 5px;
  padding: 0 2px 0 8px;
  background: #fff;
}
.dialog-body {
  padding: 0 4px 0 3px;
}
.dialog .card {
  padding-top: 4px;
}
.dialog .form-view {
  flex: none;
  height: 562px;
}
.dialog .card-main {
  height: 583px;
}
.dialog-foot {
  height: 46px;
  display: flex;
  align-items: flex-end;
  gap: 6px;
  padding: 0 2px 6px 0;
}
.help {
  width: 60px;
  height: 32px;
  margin-right: auto;
  border: 1px solid #fff;
  border-right-color: #a0a0a0;
  border-bottom-color: #a0a0a0;
}
.help span {
  width: 20px;
  height: 20px;
  border: 1px solid #39434b;
  border-radius: 3px;
  background: #e3e8ee;
  line-height: 18px;
}
.btn {
  width: 73px;
  height: 28px;
  border: 1px solid #adadad;
  background: #e1e1e1;
  font-size: 12px;
}

.status {
  flex: none;
  height: 25px;
  display: grid;
  grid-template-columns: 968px 582px 1fr;
  align-items: center;
  background: #f0f0f0;
  border-top: 1px solid #d7d7d7;
  color: #6d6d6d;
  font-size: 13px;
  line-height: 24px;
}
.status span {
  height: 22px;
  padding-left: 6px;
  border-right: 1px solid #d7d7d7;
}
.status span:last-child {
  border-right: none;
}
```
